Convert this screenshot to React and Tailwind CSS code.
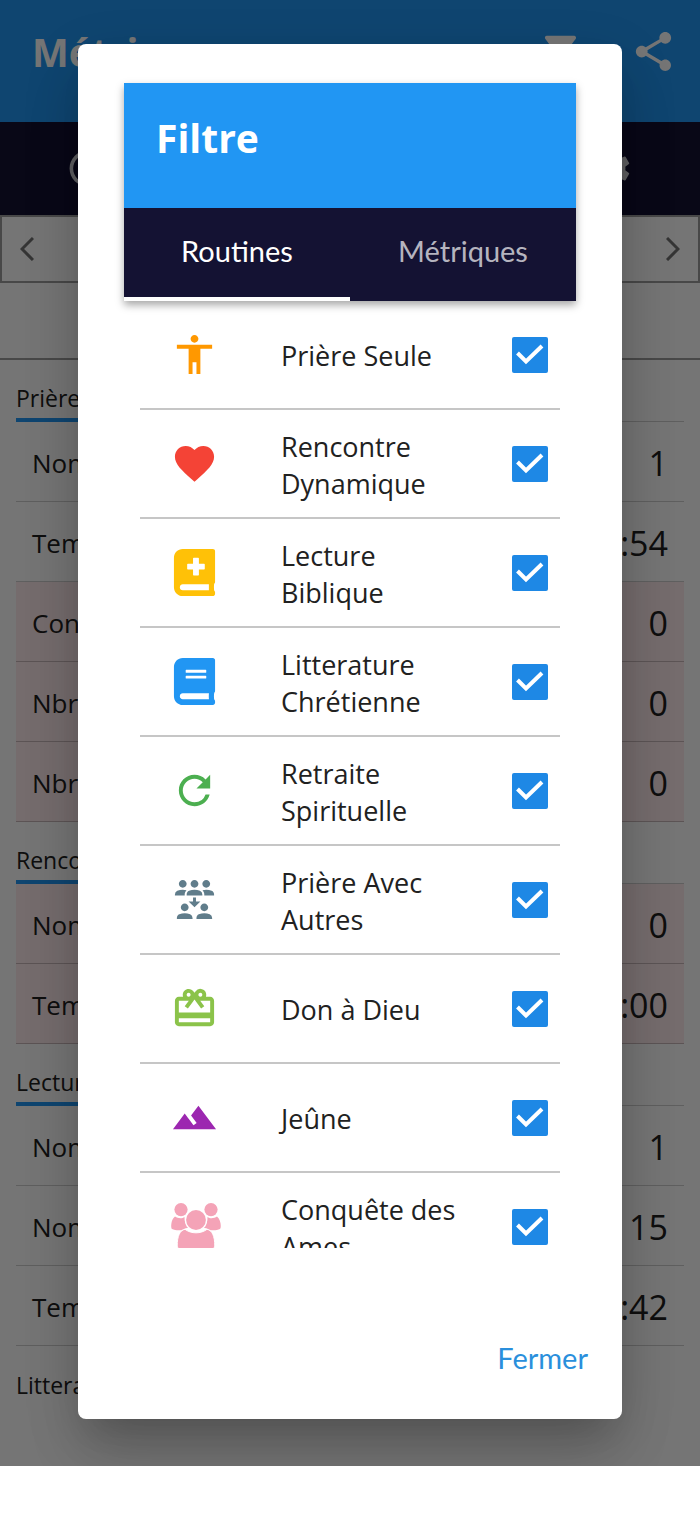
import { useState } from 'react';
import {
  MdAccessibility,
  MdBarChart,
  MdCardGiftcard,
  MdFavorite,
  MdFilterAlt,
  MdLandscape,
  MdList,
  MdReduceCapacity,
  MdRefresh,
  MdSchedule,
  MdSettings,
  MdShare,
} from 'react-icons/md';
import { FaBook, FaBookMedical } from 'react-icons/fa';

const PeopleIcon = ({ className }) => (
  <svg viewBox="0 0 52 48" width="52" height="48" fill="currentColor" className={className} aria-hidden="true">
    <circle cx="12" cy="6.600" r="6.600" />
    <circle cx="42" cy="6.600" r="6.600" />
    <path d="M6 13.500c3 2 7 2.300 9.500.4 0 5 1.500 8.300 4.500 10.600-2.500.6-4.500 1-6.500 2.200-3.500 1-7.500.5-10.500-.7C1.800 25.500 1.500 17 6 13.500z" />
    <path d="M48 13.500c-3 2-7 2.300-9.500.4 0 5-1.500 8.300-4.500 10.600 2.500.6 4.500 1 6.500 2.200 3.500 1 7.500.5 10.500-.7C52.200 25.500 52.500 17 48 13.500z" />
    <circle cx="27" cy="17" r="11.200" fill="#fff" />
    <circle cx="27" cy="17" r="9.900" />
    <path d="M16 26.300c6 4.700 16 4.700 22 0 5 1 7.800 6.500 7.800 16.700 0 1.700-1 2.700-3 2.700H11.200c-2 0-3-1-3-2.700 0-10.200 2.800-15.700 7.800-16.700z" stroke="#fff" strokeWidth="1" />
  </svg>
);

const Chevron = ({ d }) => (
  <svg viewBox="0 0 14 24" width="14" height="24" fill="none" stroke="currentColor" strokeWidth="3" aria-hidden="true">
    <path d={d} />
  </svg>
);

const routines = [
  { name: 'Prière Seule', icon: MdAccessibility, size: 47, color: 'text-[#ff9800]' },
  { name: 'Rencontre Dynamique', icon: MdFavorite, size: 47, color: 'text-[#f44336]' },
  { name: 'Lecture Biblique', icon: FaBookMedical, size: 47, color: 'text-[#ffc107]' },
  { name: 'Litterature Chrétienne', icon: FaBook, size: 47, color: 'text-[#2196f3]' },
  { name: 'Retraite Spirituelle', icon: MdRefresh, size: 47, color: 'text-[#4caf50]' },
  { name: 'Prière Avec Autres', icon: MdReduceCapacity, size: 47, color: 'text-[#607d8b]' },
  { name: 'Don à Dieu', icon: MdCardGiftcard, size: 47, color: 'text-[#8bc34a]' },
  { name: 'Jeûne', icon: MdLandscape, size: 47, color: 'text-[#9c27b0]' },
  { name: 'Conquête des Ames', icon: PeopleIcon, size: 52, color: 'text-[#f4a3b7]' },
];

const sections = [
  {
    title: 'Prière Seule',
    rows: [
      { label: 'Nombre', value: '1' },
      { label: 'Temps', value: '0:54' },
      { label: 'Consécutif', value: '0', missed: true },
      { label: 'Nbre Jours', value: '0', missed: true },
      { label: 'Nbre Fois', value: '0', missed: true },
    ],
  },
  {
    title: 'Rencontre Dynamique',
    rows: [
      { label: 'Nombre', value: '0', missed: true },
      { label: 'Temps', value: '0:00', missed: true },
    ],
  },
  {
    title: 'Lecture Biblique',
    rows: [
      { label: 'Nombre', value: '1' },
      { label: 'Nombre Chapitres', value: '15' },
      { label: 'Temps', value: '0:42' },
    ],
  },
  { title: 'Litterature Chrétienne', rows: [] },
];

function MetricSection({ title, rows }) {
  const hasRows = rows.length > 0;

  return (
    <section className="px-4">
      <div className={hasRows ? 'flex h-[62px] items-end border-b border-[#d0d0d0]' : 'flex h-[62px] items-end'}>
        <h2
          className={
            hasRows
              ? '-mb-px border-b-4 border-[#2196f3] pb-1 text-[23px] leading-8'
              : '-mb-px border-b-4 border-transparent pb-1 text-[23px] leading-8'
          }
        >
          {title}
        </h2>
      </div>
      <dl>
        {rows.map((row, index) => (
          <div
            key={index}
            className={
              row.missed
                ? 'flex h-20 items-center justify-between border-b border-[#c8b8ba] bg-[#ffebee] px-4 pt-1'
                : 'flex h-20 items-center justify-between border-b border-[#d0d0d0] px-4 pt-1'
            }
          >
            <dt className="text-[26px]">{row.label}</dt>
            <dd className="text-[34px]">{row.value}</dd>
          </div>
        ))}
      </dl>
    </section>
  );
}

function MetricsPage() {
  return (
    <div className="pb-[58px] text-[#212121]">
      <header className="flex h-[122px] items-start justify-between bg-[#2196f3] pt-7 pr-[23px] pl-8 text-white">
        <h1 className="text-[39px] leading-[48px] font-bold">Métriques</h1>
        <div className="flex gap-[46px]">
          <button type="button" aria-label="Filtrer">
            <MdFilterAlt size={47} />
          </button>
          <button type="button" aria-label="Partager">
            <MdShare size={47} />
          </button>
        </div>
      </header>
      <nav className="grid h-[93px] grid-cols-4 items-center justify-items-center bg-[#141233] text-white/80">
        <button type="button" aria-label="Temps"><MdSchedule size={43} /></button>
        <button type="button" aria-label="Graphiques"><MdBarChart size={43} /></button>
        <button type="button" aria-label="Liste"><MdList size={43} /></button>
        <button type="button" aria-label="Réglages"><MdSettings size={43} /></button>
      </nav>
      <div className="flex h-[68px] items-center justify-between border-2 border-[#9e9e9e] px-[18px] text-[#757575]">
        <button type="button" aria-label="Précédent"><Chevron d="M13 1L2 12l11 11" /></button>
        <button type="button" aria-label="Suivant"><Chevron d="M1 1l11 11L1 23" /></button>
      </div>
      <div className="h-[77px] border-b-2 border-[#9e9e9e]" />
      {sections.map((section) => (
        <MetricSection key={section.title} {...section} />
      ))}
    </div>
  );
}

function RoutineRow({ routine, checked, onToggle }) {
  const Icon = routine.icon;

  return (
    <li className="border-b-2 border-[#c6c6c6]">
      <label className="flex h-[107px] items-center pr-3">
        <span className={`flex w-[109px] shrink-0 justify-center ${routine.color}`}>
          <Icon size={routine.size} />
        </span>
        <span className="ml-8 flex-1 pt-0.5 text-[27px] leading-[37px] text-[#212121]">{routine.name}</span>
        <span className="ml-12 grid shrink-0">
          <input
            type="checkbox"
            checked={checked}
            onChange={onToggle}
            className="peer col-start-1 row-start-1 size-9 appearance-none rounded-xs border-4 border-[#757575] checked:border-0 checked:bg-[#1e88e5]"
          />
          <svg
            viewBox="0 0 36 36"
            className="pointer-events-none invisible col-start-1 row-start-1 size-9 peer-checked:visible"
            fill="none"
            stroke="#fff"
            strokeWidth="4"
          >
            <path d="M5.500 16l8.500 8.500L30 9" />
          </svg>
        </span>
      </label>
    </li>
  );
}

function FilterDialog() {
  const [tab, setTab] = useState('routines');
  const [selected, setSelected] = useState(() => routines.map((routine) => routine.name));

  const toggle = (name) => {
    setSelected((current) =>
      current.includes(name) ? current.filter((item) => item !== name) : [...current, name]
    );
  };

  const tabClass = (name) =>
    tab === name
      ? 'border-b-4 border-white pb-1 text-white'
      : 'border-b-4 border-transparent pb-1 text-white/70';

  return (
    <div
      role="dialog"
      aria-modal="true"
      aria-labelledby="filter-title"
      className="flex h-full flex-col rounded-lg bg-white px-[46px] pt-[39px] shadow-[0_22px_30px_-14px_rgba(0,0,0,0.1),0_40px_60px_-6px_rgba(0,0,0,0.14),0_18px_60px_0_rgba(0,0,0,0.12)]"
    >
      <div className="shadow-[0_4px_8px_rgba(0,0,0,0.35)]">
        <div className="h-[125px] bg-[#2196f3] px-8 pt-7">
          <h2 id="filter-title" className="text-[39px] leading-[54px] font-bold text-white">Filtre</h2>
        </div>
        <div role="tablist" className="grid h-[93px] grid-cols-2 bg-[#141233] font-['Lato',sans-serif] text-[29px]">
          <button type="button" role="tab" aria-selected={tab === 'routines'} className={tabClass('routines')} onClick={() => setTab('routines')}>
            Routines
          </button>
          <button type="button" role="tab" aria-selected={tab === 'metrics'} className={tabClass('metrics')} onClick={() => setTab('metrics')}>
            Métriques
          </button>
        </div>
      </div>
      <ul className="mx-4 min-h-0 flex-1 overflow-y-auto [scrollbar-width:none]">
        {routines.map((routine) => (
          <RoutineRow
            key={routine.name}
            routine={routine}
            checked={selected.includes(routine.name)}
            onToggle={() => toggle(routine.name)}
          />
        ))}
      </ul>
      <div className="-mr-3 flex h-[171px] shrink-0 items-center justify-end pt-12">
        <button type="button" className="font-['Lato',sans-serif] text-[29px] text-[#2a8fdc]">
          Fermer
        </button>
      </div>
    </div>
  );
}

export default function App() {
  return (
    <div className="relative font-['Open_Sans',sans-serif]">
      <MetricsPage />
      <div className="absolute inset-0 overflow-hidden bg-black/54 px-[78px] pt-11 pb-[47px]">
        <FilterDialog />
      </div>
    </div>
  );
}
